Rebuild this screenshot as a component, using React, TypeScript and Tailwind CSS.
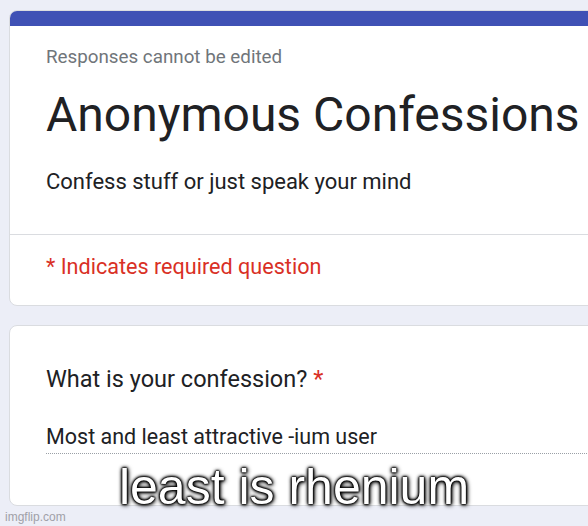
export default function App() {
  return (
    <div className="relative h-[526px] w-[588px] overflow-hidden bg-[#eceef7] font-['Roboto',sans-serif] text-[#202124]">
      <div className="flex w-[760px] flex-col gap-[19px] pl-[9px] pt-[10px]">
        {/* Header card */}
        <div className="overflow-hidden rounded-lg border border-[#dadce0] bg-white">
          <div className="-mx-px -mt-px h-[16px] bg-[#3f51b5]" />
          <div className="px-[36px] pt-[19px]">
            <p className="text-[18.8px] leading-[24px] text-[#70757a]">Responses cannot be edited</p>
            <h1 className="mt-[18px] text-[48px] leading-[56px]">Anonymous Confessions</h1>
            <p className="mt-[25px] text-[22px] leading-[28px]">Confess stuff or just speak your mind</p>
          </div>
          <div className="mt-[38px] border-t border-[#dadce0]" />
          <p className="px-[36px] pb-[24px] pt-[18px] text-[21.6px] leading-[28px] text-[#d93025]">* Indicates required question</p>
        </div>

        {/* Question card */}
        <div className="h-[181px] rounded-lg border border-[#dadce0] bg-white px-[36px] pt-[38px]">
          <p className="text-[23.5px] leading-[30px]">
            What is your confession? <span className="text-[#d93025]">*</span>
          </p>
          <p className="mt-[30px] border-b border-dotted border-[#9aa0a6] pb-[3px] text-[21.5px] leading-[26px]">
            Most and least attractive -ium user
          </p>
        </div>
      </div>

      {/* Meme caption */}
      <div className="absolute inset-x-0 top-[457px] text-center font-['Liberation_Sans',Arial,sans-serif] text-[50px] leading-[60px] text-white [text-shadow:0_0_1px_#000,0_0_2px_#000,0_0_2px_#000,0_0_3px_#000,0_0_4px_#000,1px_1px_5px_#000]">
        least is rhenium
      </div>

      {/* Watermark */}
      <div className="absolute bottom-[2px] left-[5px] font-['Liberation_Sans',Arial,sans-serif] text-[12px] leading-[14px] text-[#a0a0a8]">
        imgflip.com
      </div>
    </div>
  );
}
